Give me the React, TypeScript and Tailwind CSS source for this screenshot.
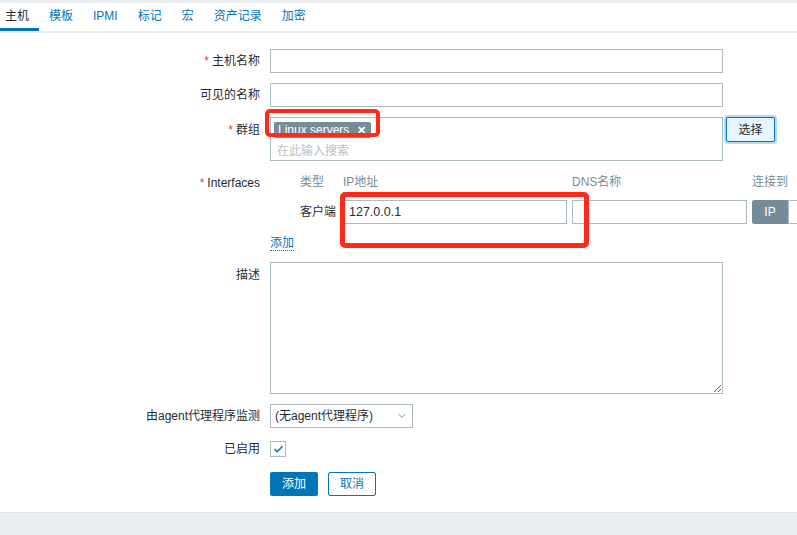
import { ChevronDown, Check } from "lucide-react";

const font = "font-['Liberation_Sans','Noto_Sans_CJK_SC',sans-serif]";

const tabs = ["主机", "模板", "IPMI", "标记", "宏", "资产记录", "加密"];

function Label({ text, req, className = "" }: { text: string; req?: boolean; className?: string }) {
  return (
    <div className={`pr-[10px] text-right ${className}`}>
      {req ? <span className="mr-[3px] text-[#e33734]">*</span> : null}
      {text}
    </div>
  );
}

export default function App() {
  return (
    <div className={`relative h-[535px] w-[797px] overflow-hidden bg-white text-[12px] text-[#1f2c33] ${font}`}>
      <div className="h-[3px] bg-[#ebeef0]" />
      <div className="flex h-[30px] border-b-2 border-[#ebeef0]">
        {tabs.map((t, i) => (
          <div
            key={t}
            className={`mr-[5px] flex h-full items-center border-b-[3px] pl-[5px] pr-[10px] ${i === 0 ? "border-[#0275b8] text-[#1f2c33]" : "border-transparent text-[#0275b8]"}`}
          >
            {t}
          </div>
        ))}
      </div>

      <div className="mt-[16px] grid grid-cols-[270px_1fr] gap-y-[10px]">
        <Label text="主机名称" req className="leading-[24px]" />
        <div className="h-[24px] w-[453px] border border-[#acbbc0]" />

        <Label text="可见的名称" className="leading-[24px]" />
        <div className="h-[24px] w-[453px] border border-[#acbbc0]" />

        <Label text="群组" req className="pt-[4px]" />
        <div className="flex items-start gap-[3px]">
          <div className="h-[44px] w-[453px] border border-[#acbbc0] px-[3px] pt-[3px]">
            <div className="inline-flex h-[16px] items-center gap-[8px] rounded-[2px] bg-[#768d99] pl-[4px] pr-[5px] text-white">
              <span>Linux servers</span>
              <span className="text-[11px] font-bold">✕</span>
            </div>
            <div className="mt-[3px] pl-[3px] text-[#b8c0c4]">在此输入搜索</div>
          </div>
          <div className="flex h-[25px] w-[49px] items-center justify-center rounded-[2px] border border-[#0275b8] bg-[#e8f5ff] shadow-[0_0_0_2px_#b4dbf5]">
            选择
          </div>
        </div>

        <Label text="Interfaces" req className="pt-[3px]" />
        <div className="pt-[2px]">
          <div className="grid grid-cols-[68px_224px_175px_60px] gap-x-[5px] text-[#768d99]">
            <div className="pl-[30px]">类型</div>
            <div>IP地址</div>
            <div>DNS名称</div>
            <div>连接到</div>
          </div>
          <div className="mt-[9px] grid grid-cols-[68px_224px_175px_80px] items-center gap-x-[5px]">
            <div className="pl-[30px] text-[#1f2c33]">客户端</div>
            <div className="flex h-[24px] items-center border border-[#acbbc0] px-[5px] text-[12.5px]">127.0.0.1</div>
            <div className="h-[24px] border border-[#acbbc0]" />
            <div className="flex h-[24px]">
              <div className="flex w-[36px] items-center justify-center rounded-l-[2px] bg-[#768d99] text-white">IP</div>
              <div className="w-[40px] border border-[#acbbc0]" />
            </div>
          </div>
          <div className="mt-[10px]">
            <span className="border-b border-dotted border-[#0275b8] text-[#0275b8]">添加</span>
          </div>
        </div>

        <Label text="描述" className="pt-[4px]" />
        <textarea className="h-[132px] w-[453px] resize border border-[#acbbc0] outline-none" />

        <Label text="由agent代理程序监测" className="leading-[24px]" />
        <div className="flex h-[24px] w-[143px] items-center justify-between border border-[#acbbc0] pl-[4px] pr-[4px]">
          <span>(无agent代理程序)</span>
          <ChevronDown size={12} strokeWidth={2} className="text-[#768d99]" />
        </div>

        <Label text="已启用" className="leading-[16px] pt-[3px]" />
        <div className="pt-[3px]">
          <div className="flex h-[16px] w-[16px] items-center justify-center border border-[#acbbc0]">
            <Check size={11} strokeWidth={3.5} className="text-[#0275b8]" />
          </div>
        </div>

        <div />
        <div className="mt-[5px] flex gap-[10px]">
          <div className="flex h-[24px] w-[48px] items-center justify-center rounded-[2px] bg-[#0275b8] text-white">添加</div>
          <div className="flex h-[24px] w-[48px] items-center justify-center rounded-[2px] border border-[#0275b8] text-[#0275b8]">取消</div>
        </div>
      </div>

      <div className="absolute bottom-0 left-0 right-0 h-[23px] border-t border-[#dfe4e7] bg-[#ebeef0]" />

      <div className="pointer-events-none absolute left-[265px] top-[109px] h-[28px] w-[115px] rounded-[5px] border-4 border-[#ff2a1a]" />
      <div className="pointer-events-none absolute left-[340px] top-[192px] h-[56px] w-[249px] rounded-[5px] border-[5px] border-[#ff2a1a]" />
    </div>
  );
}
